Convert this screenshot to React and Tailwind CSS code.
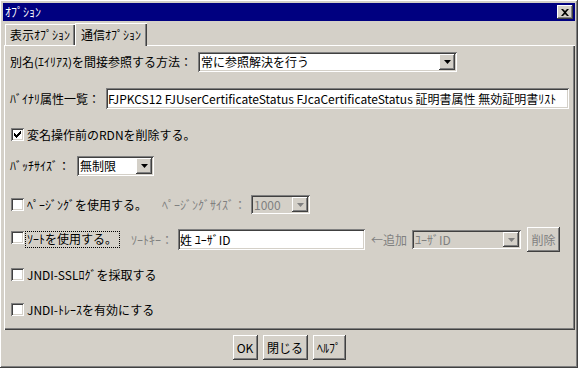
import React from "react";

// Windows-classic style "オプション" dialog (Swing Windows L&F look).

const RAISED =
  "shadow-[inset_-1px_-1px_0_#404040,inset_1px_1px_0_#ffffff,inset_-2px_-2px_0_#808080,inset_2px_2px_0_#d4d0c8]";
const SUNKEN =
  "shadow-[inset_1px_1px_0_#808080,inset_-1px_-1px_0_#ffffff,inset_2px_2px_0_#404040,inset_-2px_-2px_0_#d4d0c8]";

function Arrow({ disabled }) {
  return (
    <div className={`${RAISED} w-[16px] shrink-0 bg-[#d4d0c8] flex items-center justify-center`}>
      <svg width="7" height="4" viewBox="0 0 7 4">
        <path d="M0 0h7L3.5 4z" fill={disabled ? "#808080" : "#000"} />
      </svg>
    </div>
  );
}

function Combo({ value, className, disabled }) {
  return (
    <div
      className={`${SUNKEN} ${className} flex items-stretch p-[2px] ${
        disabled ? "bg-[#d4d0c8] text-[#808080]" : "bg-white text-black"
      }`}
    >
      <div className="flex-1 flex items-center pl-[1px] overflow-hidden whitespace-nowrap">{value}</div>
      <Arrow disabled={disabled} />
    </div>
  );
}

function Field({ value, className }) {
  return (
    <div className={`${SUNKEN} ${className} bg-white flex items-center px-[2px] overflow-hidden whitespace-nowrap`}>
      {value}
    </div>
  );
}

function Check({ checked }) {
  return (
    <div className={`${SUNKEN} w-[13px] h-[13px] shrink-0 bg-white flex items-center justify-center`}>
      {checked && (
        <svg width="7" height="7" viewBox="0 0 7 7">
          <path d="M0 2h1v1h1v1h1V3h1V2h1V1h1V0h1v3H6v1H5v1H4v1H3v1H2V6H1V5H0z" fill="#000" />
        </svg>
      )}
    </div>
  );
}

function Button({ children, className, disabled }) {
  return (
    <div
      className={`${RAISED} ${className} bg-[#d4d0c8] flex items-center justify-center ${
        disabled ? "text-[#808080]" : "text-black"
      }`}
    >
      {children}
    </div>
  );
}

export default function App() {
  return (
    <div
      className={`${RAISED} w-[578px] h-[368px] bg-[#d4d0c8] p-[3px] flex flex-col text-[12px] leading-none text-black font-['Noto_Sans_CJK_JP','Noto_Sans',sans-serif]`}
    >
      {/* title bar */}
      <div className="h-[18px] bg-[#000080] flex items-center justify-between pl-[2px] pr-[2px]">
        <span className="text-white">ｵﾌﾟｼｮﾝ</span>
        <div className={`${RAISED} w-[16px] h-[14px] bg-[#d4d0c8] flex items-center justify-center`}>
          <svg width="8" height="7" viewBox="0 0 8 7">
            <path d="M0 0h2l2 2 2-2h2L5 3.5 8 7H6L4 5 2 7H0l3-3.5z" fill="#000" />
          </svg>
        </div>
      </div>

      {/* tabs */}
      <div className="h-[24px] flex items-end">
        <div className="ml-[2px] w-[70px] h-[21px] flex items-center justify-center shadow-[inset_1px_1px_0_#ffffff,inset_-1px_0_0_#404040,inset_-2px_0_0_#808080]">
          表示ｵﾌﾟｼｮﾝ
        </div>
        <div className="relative z-10 -mb-[1px] w-[72px] h-[23px] bg-[#d4d0c8] flex items-center justify-center shadow-[inset_1px_1px_0_#ffffff,inset_-1px_0_0_#404040,inset_-2px_0_0_#808080]">
          通信ｵﾌﾟｼｮﾝ
        </div>
      </div>

      {/* panel */}
      <div className="ml-[1px] h-[285px] flex flex-col pl-[6px] shadow-[inset_1px_1px_0_#ffffff,inset_-1px_-1px_0_#404040,inset_-2px_-2px_0_#808080]">
        <div className="mt-[7px] h-[20px] flex items-center">
          <span className="w-[188px]">別名(ｴｲﾘｱｽ)を間接参照する方法：</span>
          <Combo value="常に参照解決を行う" className="w-[259px] h-[20px]" />
        </div>

        <div className="mt-[16px] h-[21px] flex items-center">
          <span className="w-[96px]">ﾊﾞｲﾅﾘ属性一覧：</span>
          <Field
            className="w-[463px] h-[21px]"
            value="FJPKCS12 FJUserCertificateStatus FJcaCertificateStatus 証明書属性 無効証明書ﾘｽﾄ"
          />
        </div>

        <div className="mt-[19px] h-[13px] flex items-center">
          <div className="ml-[1px]"><Check checked /></div>
          <span className="ml-[3px]">変名操作前のRDNを削除する。</span>
        </div>

        <div className="mt-[15px] h-[20px] flex items-center">
          <span className="w-[67px]">ﾊﾞｯﾁｻｲｽﾞ：</span>
          <Combo value="無制限" className="w-[77px] h-[20px]" />
        </div>

        <div className="mt-[19px] h-[19px] flex items-center">
          <div className="ml-[1px]"><Check /></div>
          <span className="ml-[3px] w-[135px]">ﾍﾟｰｼﾞﾝｸﾞを使用する。</span>
          <span className="w-[89px] text-[#808080]">ﾍﾟｰｼﾞﾝｸﾞｻｲｽﾞ：</span>
          <Combo value="1000" disabled className="w-[59px] h-[19px]" />
        </div>

        <div className="mt-[13px] h-[25px] flex items-center">
          <div className="ml-[1px] -mt-[4px]"><Check /></div>
          <span className="ml-[1px] -mt-[1px] w-[95px] h-[17px] border border-dotted border-black flex items-center pl-[1px]">
            ｿｰﾄを使用する。
          </span>
          <span className="ml-[11px] w-[47px] text-[#808080]">ｿｰﾄｷｰ：</span>
          <Field value="姓 ﾕｰｻﾞID" className="w-[187px] h-[21px]" />
          <span className="ml-[6px] w-[41px] text-[#808080]">←追加</span>
          <Combo value="ﾕｰｻﾞID" disabled className="w-[109px] h-[19px]" />
          <Button disabled className="ml-[6px] w-[33px] h-[25px]">削除</Button>
        </div>

        <div className="mt-[16px] h-[13px] flex items-center">
          <div className="ml-[1px]"><Check /></div>
          <span className="ml-[3px]">JNDI-SSLﾛｸﾞを採取する</span>
        </div>

        <div className="mt-[22px] h-[13px] flex items-center">
          <div className="ml-[1px]"><Check /></div>
          <span className="ml-[3px]">JNDI-ﾄﾚｰｽを有効にする</span>
        </div>
      </div>

      {/* bottom buttons */}
      <div className="mt-[5px] flex justify-center gap-[5px]">
        <Button className="w-[25px] h-[25px]">OK</Button>
        <Button className="w-[45px] h-[25px]">閉じる</Button>
        <Button className="w-[33px] h-[25px]">ﾍﾙﾌﾟ</Button>
      </div>
    </div>
  );
}
